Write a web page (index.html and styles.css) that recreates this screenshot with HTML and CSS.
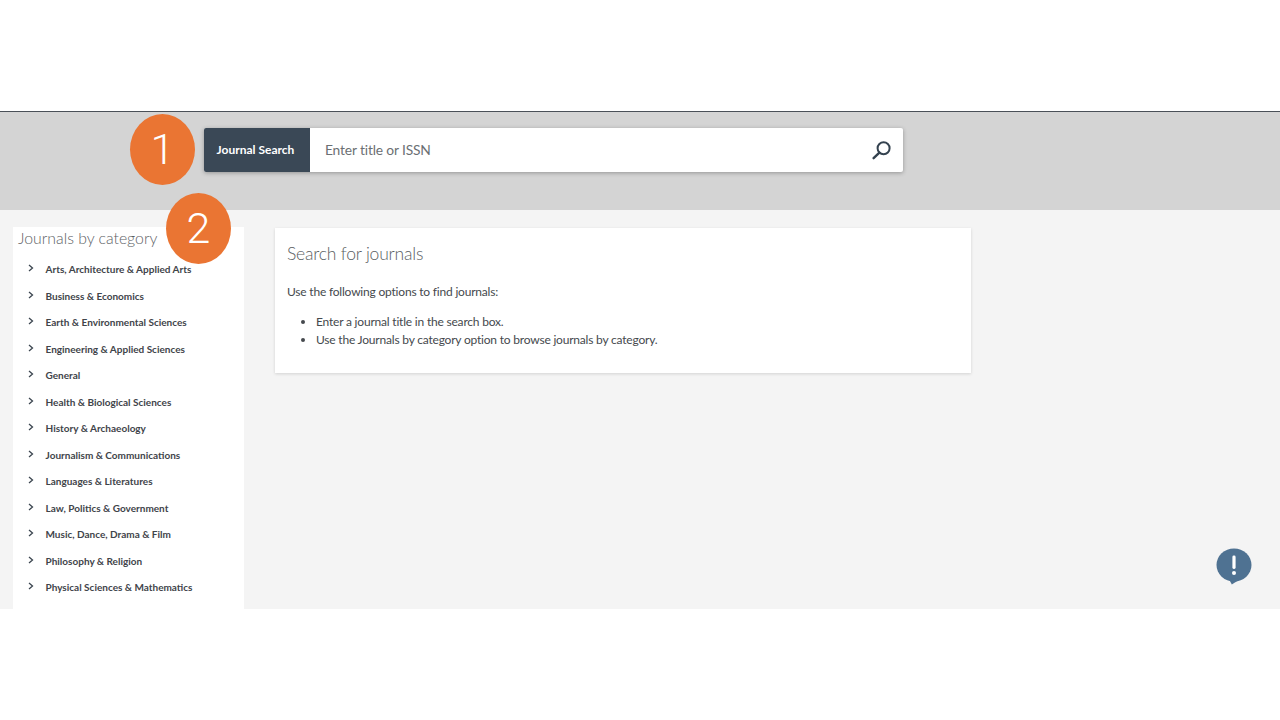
FILE: index.html
```html
<!DOCTYPE html>
<html lang="en">
<head>
<meta charset="utf-8">
<title>Journal Search</title>
<link rel="stylesheet" href="styles.css">
</head>
<body>
<div class="top-space"></div>
<div class="app">
  <header class="search-band">
    <div class="search-bar">
      <div class="search-label">Journal Search</div>
      <div class="search-input">Enter title or ISSN</div>
      <svg class="search-icon" width="20" height="20" viewBox="0 0 20 20" aria-hidden="true">
        <circle cx="12.6" cy="8.2" r="6" fill="none" stroke="#34424f" stroke-width="2"/>
        <path d="M8.4 12.6 2.6 18.2" fill="none" stroke="#34424f" stroke-width="2.4" stroke-linecap="round"/>
      </svg>
    </div>
  </header>
  <div class="content">
    <aside class="sidebar">
      <h2 class="side-title">Journals by category</h2>
      <ul class="cats">
        <li class="cat"><svg class="chev" width="6" height="8" viewBox="0 0 6 8"><path d="M1 1 4.5 4 1 7" fill="none" stroke="#3c4650" stroke-width="1.3"/></svg><span>Arts, Architecture &amp; Applied Arts</span></li>
        <li class="cat"><svg class="chev" width="6" height="8" viewBox="0 0 6 8"><path d="M1 1 4.5 4 1 7" fill="none" stroke="#3c4650" stroke-width="1.3"/></svg><span>Business &amp; Economics</span></li>
        <li class="cat"><svg class="chev" width="6" height="8" viewBox="0 0 6 8"><path d="M1 1 4.5 4 1 7" fill="none" stroke="#3c4650" stroke-width="1.3"/></svg><span>Earth &amp; Environmental Sciences</span></li>
        <li class="cat"><svg class="chev" width="6" height="8" viewBox="0 0 6 8"><path d="M1 1 4.5 4 1 7" fill="none" stroke="#3c4650" stroke-width="1.3"/></svg><span>Engineering &amp; Applied Sciences</span></li>
        <li class="cat"><svg class="chev" width="6" height="8" viewBox="0 0 6 8"><path d="M1 1 4.5 4 1 7" fill="none" stroke="#3c4650" stroke-width="1.3"/></svg><span>General</span></li>
        <li class="cat"><svg class="chev" width="6" height="8" viewBox="0 0 6 8"><path d="M1 1 4.5 4 1 7" fill="none" stroke="#3c4650" stroke-width="1.3"/></svg><span>Health &amp; Biological Sciences</span></li>
        <li class="cat"><svg class="chev" width="6" height="8" viewBox="0 0 6 8"><path d="M1 1 4.5 4 1 7" fill="none" stroke="#3c4650" stroke-width="1.3"/></svg><span>History &amp; Archaeology</span></li>
        <li class="cat"><svg class="chev" width="6" height="8" viewBox="0 0 6 8"><path d="M1 1 4.5 4 1 7" fill="none" stroke="#3c4650" stroke-width="1.3"/></svg><span>Journalism &amp; Communications</span></li>
        <li class="cat"><svg class="chev" width="6" height="8" viewBox="0 0 6 8"><path d="M1 1 4.5 4 1 7" fill="none" stroke="#3c4650" stroke-width="1.3"/></svg><span>Languages &amp; Literatures</span></li>
        <li class="cat"><svg class="chev" width="6" height="8" viewBox="0 0 6 8"><path d="M1 1 4.5 4 1 7" fill="none" stroke="#3c4650" stroke-width="1.3"/></svg><span>Law, Politics &amp; Government</span></li>
        <li class="cat"><svg class="chev" width="6" height="8" viewBox="0 0 6 8"><path d="M1 1 4.5 4 1 7" fill="none" stroke="#3c4650" stroke-width="1.3"/></svg><span>Music, Dance, Drama &amp; Film</span></li>
        <li class="cat"><svg class="chev" width="6" height="8" viewBox="0 0 6 8"><path d="M1 1 4.5 4 1 7" fill="none" stroke="#3c4650" stroke-width="1.3"/></svg><span>Philosophy &amp; Religion</span></li>
        <li class="cat"><svg class="chev" width="6" height="8" viewBox="0 0 6 8"><path d="M1 1 4.5 4 1 7" fill="none" stroke="#3c4650" stroke-width="1.3"/></svg><span>Physical Sciences &amp; Mathematics</span></li>
      </ul>
    </aside>
    <main class="card">
      <h1 class="card-title">Search for journals</h1>
      <p class="card-intro">Use the following options to find journals:</p>
      <ul class="card-list">
        <li>Enter a journal title in the search box.</li>
        <li>Use the Journals by category option to browse journals by category.</li>
      </ul>
    </main>
  </div>
  <div class="badge badge-one">1</div>
  <div class="badge badge-two">2</div>
  <svg class="feedback" width="36" height="38" viewBox="0 0 36 38" aria-hidden="true">
    <ellipse cx="18" cy="17" rx="17.5" ry="16.5" fill="#4f7292"/>
    <path d="M13 31 15.8 36.5 26 30Z" fill="#4f7292"/>
    <rect x="16.4" y="7.5" width="3.2" height="13.5" rx="1.4" fill="#fff"/>
    <circle cx="18" cy="25" r="2" fill="#fff"/>
  </svg>
</div>
</body>
</html>
```
FILE: styles.css
```css
* { box-sizing: border-box; }
html, body { margin: 0; padding: 0; }
body {
  background: #fff;
  font-family: Lato, "Noto Sans", sans-serif;
  color: #444;
  height: 720px;
  overflow: hidden;
}
.top-space { height: 111px; }
.app {
  position: relative;
  height: 498px;
  background: #f4f4f4;
  overflow: hidden;
}
.search-band {
  height: 99px;
  background: #d4d4d4;
  border-top: 1px solid #4a5058;
  padding: 16px 0 0 204px;
}
.search-bar {
  display: flex;
  align-items: center;
  width: 699px;
  height: 44px;
  background: #fff;
  border-radius: 2px;
  box-shadow: 0 1px 4px rgba(0,0,0,.3);
}
.search-label {
  width: 106px;
  height: 100%;
  display: flex;
  align-items: center;
  justify-content: center;
  padding: 0 3px 1px 0;
  background: #3a4856;
  color: #fff;
  font-size: 12px;
  font-weight: 700;
  border-radius: 2px 0 0 2px;
}
.search-input {
  flex: 1;
  padding: 0 0 2px 15px;
  font-size: 13.8px;
  letter-spacing: -.15px;
  color: #6b6f73;
}
.search-icon { margin-right: 12px; }
.content {
  display: flex;
  align-items: flex-start;
  padding: 17px 0 0 13px;
  height: 399px;
}
.sidebar {
  width: 231px;
  height: 382px;
  background: #fff;
  padding: 0 0 0 5px;
}
.side-title {
  margin: 0;
  font-size: 15.8px;
  font-weight: 300;
  line-height: 22px;
  color: #5d6165;
}
.cats {
  list-style: none;
  margin: 6.8px 0 0;
  padding: 0 0 0 9.5px;
}
.cat {
  display: flex;
  align-items: center;
  height: 26.5px;
  font-size: 10px;
  font-weight: 700;
  color: #3f444a;
}
.chev { margin: -2px 12px 0 0; flex: none; }
.card {
  width: 696px;
  height: 145px;
  margin: 1px 0 0 31px;
  padding: 14px 12px 0;
  background: #fff;
  box-shadow: 0 1px 3px rgba(0,0,0,.14);
}
.card-title {
  margin: 0;
  font-size: 17.5px;
  letter-spacing: -.2px;
  font-weight: 300;
  line-height: 24px;
  color: #5a5e62;
}
.card-intro {
  margin: 17px 0 0;
  font-size: 12px;
  letter-spacing: -.2px;
  line-height: 18px;
  color: #45494d;
}
.card-list {
  margin: 12px 0 0;
  padding: 0 0 0 29px;
  font-size: 12px;
  letter-spacing: -.2px;
  line-height: 18px;
  color: #45494d;
}
.badge {
  position: absolute;
  width: 65px;
  height: 71px;
  border-radius: 50%;
  background: #ea7533;
  color: #fff;
  font-family: Roboto, "Liberation Sans", sans-serif;
  font-weight: 300;
  font-size: 43px;
  line-height: 71px;
  text-align: center;
}
.badge-one { left: 130px; top: 3px; }
.badge-two { left: 166px; top: 82px; }
.feedback { position: absolute; left: 1216px; top: 437px; }
```
